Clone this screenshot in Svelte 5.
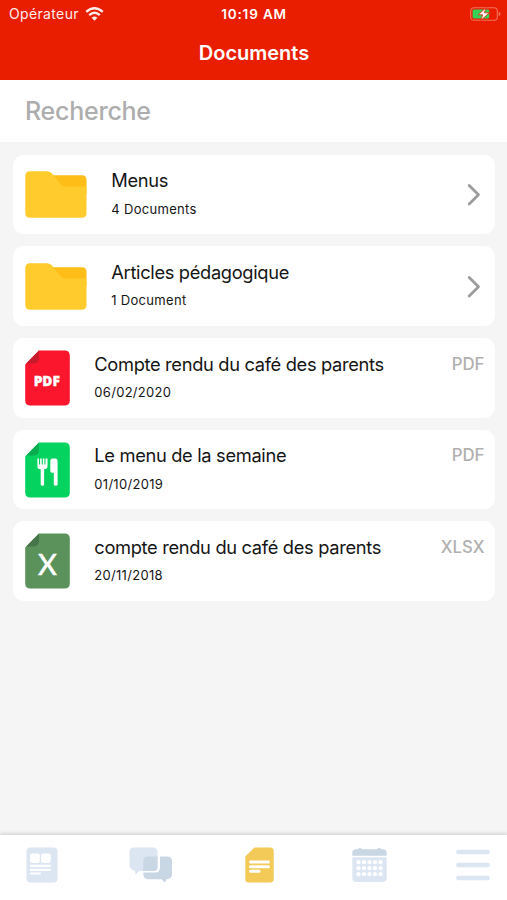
<script lang="ts">
  type Kind = 'folder' | 'pdf' | 'menu' | 'xlsx';
  type Entry = { kind: Kind; title: string; detail: string; format?: string };

  const entries: Entry[] = [
    { kind: 'folder', title: 'Menus', detail: '4 Documents' },
    { kind: 'folder', title: 'Articles pédagogique', detail: '1 Document' },
    { kind: 'pdf', title: 'Compte rendu du café des parents', detail: '06/02/2020', format: 'PDF' },
    { kind: 'menu', title: 'Le menu de la semaine', detail: '01/10/2019', format: 'PDF' },
    { kind: 'xlsx', title: 'compte rendu du café des parents', detail: '20/11/2018', format: 'XLSX' }
  ];

  let search = $state('');

  const visible = $derived(
    entries.filter((entry) => entry.title.toLowerCase().includes(search.toLowerCase()))
  );
</script>

<div class="screen">
  <header class="header">
    <div class="status-bar">
      <span class="carrier">
        Opérateur
        <svg viewBox="0 0 19 14" width="19" height="14" fill="none" stroke="#fff" stroke-width="2.4">
          <path d="M1.2 4.9Q9.5-2.2 17.8 4.9" />
          <path d="M4.2 8.2Q9.5 3.4 14.8 8.2" />
          <path d="M9.5 13.8 6.6 10.8Q9.5 8.4 12.4 10.8Z" fill="#fff" stroke="none" />
        </svg>
      </span>
      <span class="clock">10:19 AM</span>
      <svg class="battery" viewBox="0 0 31 14" width="31" height="14">
        <rect x="0.7" y="0.7" width="26.6" height="12.6" rx="3.4" fill="none" stroke="#f2725c" stroke-width="1.1" />
        <path d="M28.7 4.8q1.8.6 1.8 2.2t-1.8 2.2z" fill="#f2725c" />
        <rect x="2.6" y="2.6" width="16.6" height="8.8" rx="1.3" fill="#34d058" />
        <path d="M16.2.6 8.2 7.8h4.5l-2 5.8 8.5-7.8h-4.9z" fill="#fff" stroke="#e91e00" stroke-width="0.8" />
      </svg>
    </div>
    <h1 class="title">Documents</h1>
  </header>

  <div class="search">
    <input class="search-input" type="text" placeholder="Recherche" bind:value={search} />
  </div>

  <main class="list">
    {#each visible as entry}
      <article class="card">
        {#if entry.kind === 'folder'}
          <svg class="icon" viewBox="0 0 62 48" width="62" height="48">
            <path d="M24 5.2H57Q61.5 5.2 61.5 9.7V24H24Z" fill="#ffbd17" />
            <path d="M5 1.2H22Q24.5 1.2 26.5 2.9L36 14.4Q38 16.6 41 16.6H61.5V42.9Q61.5 47.7 56.7 47.7H5Q.3 47.7.3 42.9V5.9Q.3 1.2 5 1.2Z" fill="#ffcb2d" />
          </svg>
        {:else}
          <svg class="icon" viewBox="0 0 45 56" width="45" height="56">
            <path class="sheet {entry.kind}" d="M14 .4H39.5Q44.8.4 44.8 5.7V50.3Q44.8 55.6 39.5 55.6H5.5Q.2 55.6.2 50.3V14.5Z" />
            <path class="fold {entry.kind}" d="M14 .4V7.5Q14 13.5 8 13.5H1.2Z" />
            {#if entry.kind === 'pdf'}
              <text class="label-pdf" x="21.8" y="35.6" text-anchor="middle">PDF</text>
            {:else if entry.kind === 'xlsx'}
              <text class="label-x" x="22.5" y="42" text-anchor="middle">X</text>
            {:else}
              <g fill="#fff">
                <path d="M12.4 16.5h1.6v6h1.1v-6h1.6v6h1.1v-6h1.6v6h1.1v-6h2v7.5q0 3.300-3.400 3.300V42.400q0 1.400-1.700 1.400t-1.700-1.400V27.300q-3.300 0-3.300-3.300Z" />
                <path d="M25.3 19q0-2.500 2.500-2.500h2.400q2.400 0 2.400 2.400V42.400q0 1.400-1.900 1.400t-1.900-1.400V30.800h-1.700q-1.800 0-1.800-1.800Z" />
              </g>
            {/if}
          </svg>
        {/if}
        <div class="info">
          <span class="name">{entry.title}</span>
          <span class="detail">{entry.detail}</span>
        </div>
        {#if entry.format}
          <span class="format">{entry.format}</span>
        {:else}
          <svg class="chevron" viewBox="0 0 14 23" width="14" height="23" fill="none" stroke="#9c9c9c" stroke-width="2.8" stroke-linecap="round" stroke-linejoin="round">
            <path d="m2.2 2.5 9.3 9.2-9.3 9.2" />
          </svg>
        {/if}
      </article>
    {/each}
  </main>

  <nav class="tabs">
    <svg viewBox="0 0 32 36" width="32" height="36">
      <rect x="0.5" y="0.5" width="31" height="35" rx="4" fill="#dce6f2" />
      <g fill="#fff">
        <rect x="4" y="6.5" width="9.8" height="9.6" rx="2" />
        <rect x="15" y="6.5" width="9.8" height="9.6" rx="2" />
        <rect x="4" y="17.8" width="21" height="2.2" rx="1" />
        <rect x="4" y="21.7" width="21" height="2.2" rx="1" />
        <rect x="4" y="25.4" width="11" height="2.2" rx="1" />
      </g>
    </svg>
    <svg class="chat" viewBox="0 0 44 36" width="44" height="36">
      <path d="M5 .5H24Q28.5.5 28.5 5V20Q28.5 24 24.5 24H10L6.7 27.8 6 24Q.5 22.5.5 18V5Q.5.5 5 .5Z" fill="#dce6f2" />
      <path d="M31 9.500H38.5Q43 9.5 43 14V27Q43 32 37.5 32.2L36 35.5 32.5 32.2H19Q14.3 32 14.3 27V25.5H26Q31 25.5 31 20Z" fill="#c9d6e4" />
      <path d="M14.3 13.5Q14.3 9.5 18.5 9.5H28.5V20Q28.5 24 24.5 24H14.3Z" fill="#c9d6e4" />
    </svg>
    <svg class="documents" viewBox="0 0 29 36" width="29" height="36">
      <path d="M9.5.4H25Q28.7.4 28.7 4V32Q28.7 35.6 25 35.6H4Q.3 35.6.3 32V9.5Z" fill="#f3ca58" />
      <g fill="#fff">
        <rect x="4" y="13.5" width="21" height="3" rx="1.5" />
        <rect x="4" y="18.3" width="21" height="3" rx="1.5" />
        <rect x="4" y="22.8" width="11.5" height="3" rx="1.5" />
      </g>
    </svg>
    <svg class="calendar" viewBox="0 0 35 36" width="35" height="36">
      <path d="M.3 8.8V6Q.3 2.3 4 2.3H5.8Q7.8-.2 10.2 2.3H24.8Q27.2-.2 29.5 2.3H31Q34.7 2.3 34.7 6V8.8Z" fill="#c9d6e4" />
      <path d="M.3 10.3H34.7V31Q34.7 35 30.7 35H4.3Q.3 35 .3 31Z" fill="#dce6f2" />
      {#each [15.2, 21.2, 27.2] as cy}
        {#each [6.5, 12, 17.5, 23, 28.5] as cx}
          <circle {cx} {cy} r="2.1" fill="#fff" />
        {/each}
      {/each}
    </svg>
    <svg viewBox="0 0 34 36" width="34" height="36" stroke="#dce6f2" stroke-width="4.4" stroke-linecap="round">
      <path d="M2.3 5H31.7M2.3 18H31.7M2.3 31H31.7" />
    </svg>
  </nav>
</div>

<style>
  :global(body) {
    margin: 0;
  }

  .screen {
    display: flex;
    flex-direction: column;
    width: 507px;
    height: 900px;
    overflow: hidden;
    background: #f5f5f5;
    color: #151515;
    font-family: Inter, 'Liberation Sans', sans-serif;
  }

  .header {
    height: 80px;
    background: #e91e00;
    color: #fff;
  }

  .status-bar {
    display: grid;
    grid-template-columns: 1fr auto 1fr;
    align-items: center;
    height: 27px;
    padding: 0 6px 0 9px;
    font-size: 14px;
  }

  .carrier {
    display: flex;
    align-items: center;
    gap: 6px;
    letter-spacing: 0.35px;
    opacity: 0.92;
  }

  .clock {
    margin-right: 2px;
    font-weight: 600;
    font-size: 13.5px;
    letter-spacing: 0.85px;
  }

  .battery {
    justify-self: end;
  }

  .title {
    margin: 0;
    padding: 1px 0 0 1px;
    line-height: 50px;
    text-align: center;
    font-size: 20px;
    font-weight: 600;
  }

  .search {
    display: flex;
    height: 62px;
    background: #fff;
  }

  .search-input {
    flex: 1;
    padding: 0 25px;
    border: 0;
    outline: 0;
    background: transparent;
    font: 500 25px Inter, 'Liberation Sans', sans-serif;
    letter-spacing: -0.25px;
  }

  .search-input::placeholder {
    color: #adadad;
    opacity: 1;
  }

  .list {
    display: flex;
    flex: 1;
    flex-direction: column;
    gap: 12.2px;
    padding: 12.7px 12.5px 0 13px;
  }

  .card {
    display: flex;
    align-items: center;
    box-sizing: border-box;
    height: 79.5px;
    padding: 0 10px 0 12px;
    border-radius: 11px;
    background: #fff;
  }

  .icon {
    flex: none;
    margin-right: 24.3px;
  }

  .sheet.pdf {
    fill: #fb152d;
  }

  .fold.pdf {
    fill: #c71a2a;
  }

  .sheet.menu {
    fill: #04d35f;
  }

  .fold.menu {
    fill: #08ad50;
  }

  .sheet.xlsx {
    fill: #5b925b;
  }

  .fold.xlsx {
    fill: #47754a;
  }

  .label-pdf {
    fill: #fff;
    stroke: #fff;
    stroke-width: 0.3px;
    font: 800 13.8px 'Open Sans', sans-serif;
  }

  .label-x {
    fill: #fff;
    stroke: #fff;
    stroke-width: 0.6px;
    font: 400 29px Lato, sans-serif;
  }

  .info {
    display: flex;
    flex: 1;
    flex-direction: column;
    gap: 6.4px;
    padding-bottom: 1.8px;
    white-space: nowrap;
  }

  .name {
    font-size: 18.3px;
    letter-spacing: -0.33px;
    line-height: 24px;
  }

  .detail {
    font-size: 13px;
    letter-spacing: 0.3px;
    line-height: 20px;
  }

  .format {
    align-self: flex-start;
    padding-top: 14.5px;
    color: #b0b0b0;
    font-size: 16.8px;
    font-weight: 500;
    line-height: 22px;
  }

  .chevron {
    margin-right: 4px;
  }

  .tabs {
    display: flex;
    justify-content: space-between;
    align-items: flex-start;
    box-sizing: border-box;
    height: 65px;
    padding: 12px 17px 0 26px;
    background: #fff;
    box-shadow: 0 -1px 4px rgba(0, 0, 0, 0.18);
  }

  .chat {
    margin: 0 -0.5px 0 -1.5px;
  }

  .documents {
    margin-right: 5.5px;
  }

  .calendar {
    margin-right: -4px;
  }
</style>
